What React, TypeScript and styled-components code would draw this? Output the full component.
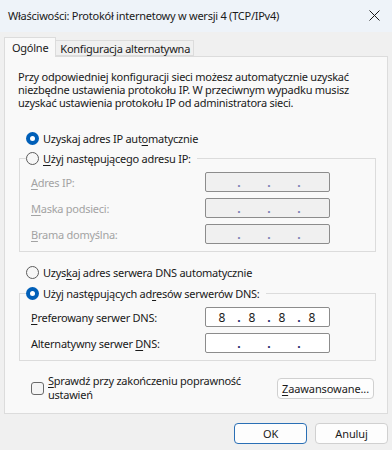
import React from 'react';
import styled, {createGlobalStyle} from 'styled-components';

const GlobalStyle = createGlobalStyle`
    html, body {
        margin: 0;
        padding: 0;
        background: #f0f0f0;
    }
    * {
        box-sizing: border-box;
    }
`;

const FONT = '"Noto Sans", "Open Sans", sans-serif';

const Window = styled.div`
    width: 392px;
    height: 450px;
    display: flex;
    flex-direction: column;
    background: #f0f0f0;
    font-family: ${FONT};
    font-size: 11px;
    letter-spacing: -0.25px;
    color: #1a1a1a;
`;

const TitleBar = styled.div`
    height: 32px;
    display: flex;
    align-items: center;
    justify-content: space-between;
    padding: 0 6px 2px 8px;
    background: #eef3f9;
`;

const Title = styled.div`
    font-size: 11px;
    color: #1a1a1a;
`;

const CloseButton = styled.div`
    width: 24px;
    height: 24px;
    display: flex;
    align-items: center;
    justify-content: center;
`;

const Body = styled.div`
    display: flex;
    flex-direction: column;
    padding: 5px 4px 0 4px;
`;

const TabStrip = styled.div`
    display: flex;
    align-items: flex-end;
    height: 19px;
`;

const Tab = styled.div<{$active?: boolean}>`
    height: ${(p) => (p.$active ? '20px' : '16px')};
    margin-bottom: ${(p) => (p.$active ? '-1px' : '0')};
    padding: ${(p) => (p.$active ? '0 7px' : '0 3px 0 4px')};
    display: flex;
    align-items: center;
    background: ${(p) => (p.$active ? '#f9f9f9' : '#f0f0f0')};
    border: 1px solid #dcdcdc;
    border-bottom: ${(p) => (p.$active ? 'none' : '1px solid #dcdcdc')};
    border-left: ${(p) => (p.$active ? '1px solid #dcdcdc' : 'none')};
    position: relative;
    z-index: ${(p) => (p.$active ? 1 : 0)};
`;

const Panel = styled.div`
    height: 358px;
    display: flex;
    flex-direction: column;
    padding: 13px 11px 0 14px;
    background: #f9f9f9;
    border: 1px solid #dcdcdc;
`;

const Intro = styled.p`
    margin: 0 0 0 -1px;
    width: 340px;
    line-height: 13px;
`;

const RadioRow = styled.div<{$top?: number}>`
    height: 20px;
    display: flex;
    align-items: center;
    gap: 4px;
    padding-left: 7px;
    margin-top: ${(p) => p.$top ?? 0}px;
`;

const RadioDot = styled.span<{$checked?: boolean}>`
    width: 13px;
    height: 13px;
    border-radius: 50%;
    flex: none;
    display: flex;
    align-items: center;
    justify-content: center;
    background: ${(p) => (p.$checked ? '#005fb8' : '#f7f7f7')};
    border: ${(p) => (p.$checked ? 'none' : '1px solid #5c5c5c')};

    &::after {
        content: '';
        display: ${(p) => (p.$checked ? 'block' : 'none')};
        width: 5px;
        height: 5px;
        border-radius: 50%;
        background: #ffffff;
    }
`;

const Group = styled.fieldset<{$top?: number}>`
    margin: ${(p) => p.$top ?? 0}px 0 0 0;
    padding: 0 0 7px 11px;
    border: 1px solid #dcdcdc;
    min-width: 0;
`;

const Legend = styled.legend`
    margin-left: -5px;
    padding: 0 6px 0 0;
    height: 20px;
    display: flex;
    align-items: center;
    gap: 4px;
`;

const FieldRow = styled.div<{$top?: number}>`
    display: grid;
    grid-template-columns: 174px 125px;
    align-items: center;
    margin-top: ${(p) => p.$top ?? 6}px;
    height: 20px;
`;

const FieldLabel = styled.span<{$disabled?: boolean}>`
    color: ${(p) => (p.$disabled ? '#a3a3a3' : '#1a1a1a')};
`;

const IpBox = styled.div<{$disabled?: boolean}>`
    height: 20px;
    display: flex;
    align-items: center;
    padding-left: 3px;
    background: ${(p) => (p.$disabled ? '#f0f0f0' : '#ffffff')};
    border: 1px solid #8c8c8c;
    border-radius: 2px;
    font-size: 12px;
    letter-spacing: 0;
`;

const Octet = styled.span`
    width: 26px;
    text-align: center;
    color: #1a1a1a;
`;

const Dot = styled.span<{$disabled?: boolean}>`
    width: 4px;
    text-align: center;
    margin-left: 2px;
    margin-right: -2px;
    color: ${(p) => (p.$disabled ? '#7c7cb4' : '#23236b')};
    font-weight: 700;
`;

const Key = styled.span`
    text-decoration: underline;
    text-underline-offset: 2px;
`;

const BottomRow = styled.div`
    display: flex;
    align-items: center;
    justify-content: space-between;
    margin-top: 13px;
    padding: 0 2px 0 12px;
`;

const CheckWrap = styled.div`
    display: flex;
    align-items: center;
    gap: 4px;
`;

const CheckBox = styled.span`
    width: 13px;
    height: 13px;
    flex: none;
    border: 1px solid #6a6a6a;
    border-radius: 3px;
    background: #f5f5f5;
`;

const CheckText = styled.span`
    line-height: 14px;
    width: 200px;
`;

const Button = styled.button<{$primary?: boolean; $width?: number}>`
    height: 21px;
    width: ${(p) => p.$width ?? 73}px;
    padding: 0 4px;
    font-family: ${FONT};
    font-size: 11px;
    letter-spacing: -0.1px;
    color: #1a1a1a;
    background: #fdfdfd;
    border: 1px solid ${(p) => (p.$primary ? '#2a6fb5' : '#d0d0d0')};
    border-radius: 4px;
    display: flex;
    align-items: center;
    justify-content: center;
`;

const Footer = styled.div`
    display: flex;
    justify-content: flex-end;
    gap: 8px;
    margin-top: 9px;
`;

const IpInput = ({values, disabled}: {values?: string[]; disabled?: boolean}) => {
    const octets = values ?? ['', '', '', ''];
    return (
        <IpBox $disabled={disabled}>
            {octets.map((o, i) => (
                <React.Fragment key={i}>
                    <Octet>{o}</Octet>
                    {i < 3 && <Dot $disabled={disabled}>.</Dot>}
                </React.Fragment>
            ))}
        </IpBox>
    );
};

const App = () => {
    return (
        <Window>
            <GlobalStyle/>
            <TitleBar>
                <Title>{'Właściwości: Protokół internetowy w wersji 4 (TCP/IPv4)'}</Title>
                <CloseButton>
                    <svg width='11' height='11' viewBox='0 0 11 11'>
                        <path d='M0.5 0.5 L10.5 10.5 M10.5 0.5 L0.5 10.5' stroke='#1a1a1a' strokeWidth='1'/>
                    </svg>
                </CloseButton>
            </TitleBar>
            <Body>
                <TabStrip>
                    <Tab $active={true}>{'Ogólne'}</Tab>
                    <Tab>{'Konfiguracja alternatywna'}</Tab>
                </TabStrip>
                <Panel>
                    <Intro>
                        {'Przy odpowiedniej konfiguracji sieci możesz automatycznie uzyskać niezbędne ustawienia protokołu IP. W przeciwnym wypadku musisz uzyskać ustawienia protokołu IP od administratora sieci.'}
                    </Intro>

                    <RadioRow $top={19}>
                        <RadioDot $checked={true}/>
                        <span>{'Uzyskaj adres IP aut'}<Key>{'o'}</Key>{'matycznie'}</span>
                    </RadioRow>
                    <Group>
                        <Legend>
                            <RadioDot/>
                            <span><Key>{'U'}</Key>{'żyj następującego adresu IP:'}</span>
                        </Legend>
                        <FieldRow $top={4}>
                            <FieldLabel $disabled={true}><Key>{'A'}</Key>{'dres IP:'}</FieldLabel>
                            <IpInput disabled={true}/>
                        </FieldRow>
                        <FieldRow>
                            <FieldLabel $disabled={true}><Key>{'M'}</Key>{'aska podsieci:'}</FieldLabel>
                            <IpInput disabled={true}/>
                        </FieldRow>
                        <FieldRow>
                            <FieldLabel $disabled={true}><Key>{'B'}</Key>{'rama domyślna:'}</FieldLabel>
                            <IpInput disabled={true}/>
                        </FieldRow>
                    </Group>

                    <RadioRow $top={10}>
                        <RadioDot/>
                        <span>{'Uzys'}<Key>{'k'}</Key>{'aj adres serwera DNS automatycznie'}</span>
                    </RadioRow>
                    <Group $top={1}>
                        <Legend>
                            <RadioDot $checked={true}/>
                            <span>{'Użyj następujących ad'}<Key>{'r'}</Key>{'esów serwerów DNS:'}</span>
                        </Legend>
                        <FieldRow $top={4}>
                            <FieldLabel><Key>{'P'}</Key>{'referowany serwer DNS:'}</FieldLabel>
                            <IpInput values={['8', '8', '8', '8']}/>
                        </FieldRow>
                        <FieldRow>
                            <FieldLabel>{'Alternatywny serwer '}<Key>{'D'}</Key>{'NS:'}</FieldLabel>
                            <IpInput/>
                        </FieldRow>
                    </Group>

                    <BottomRow>
                        <CheckWrap>
                            <CheckBox/>
                            <CheckText><Key>{'S'}</Key>{'prawdź przy zakończeniu poprawność ustawień'}</CheckText>
                        </CheckWrap>
                        <Button $width={97}><Key>{'Z'}</Key>{'aawansowane...'}</Button>
                    </BottomRow>
                </Panel>
                <Footer>
                    <Button $primary={true}>{'OK'}</Button>
                    <Button>{'Anuluj'}</Button>
                </Footer>
            </Body>
        </Window>
    );
};

export default App;
